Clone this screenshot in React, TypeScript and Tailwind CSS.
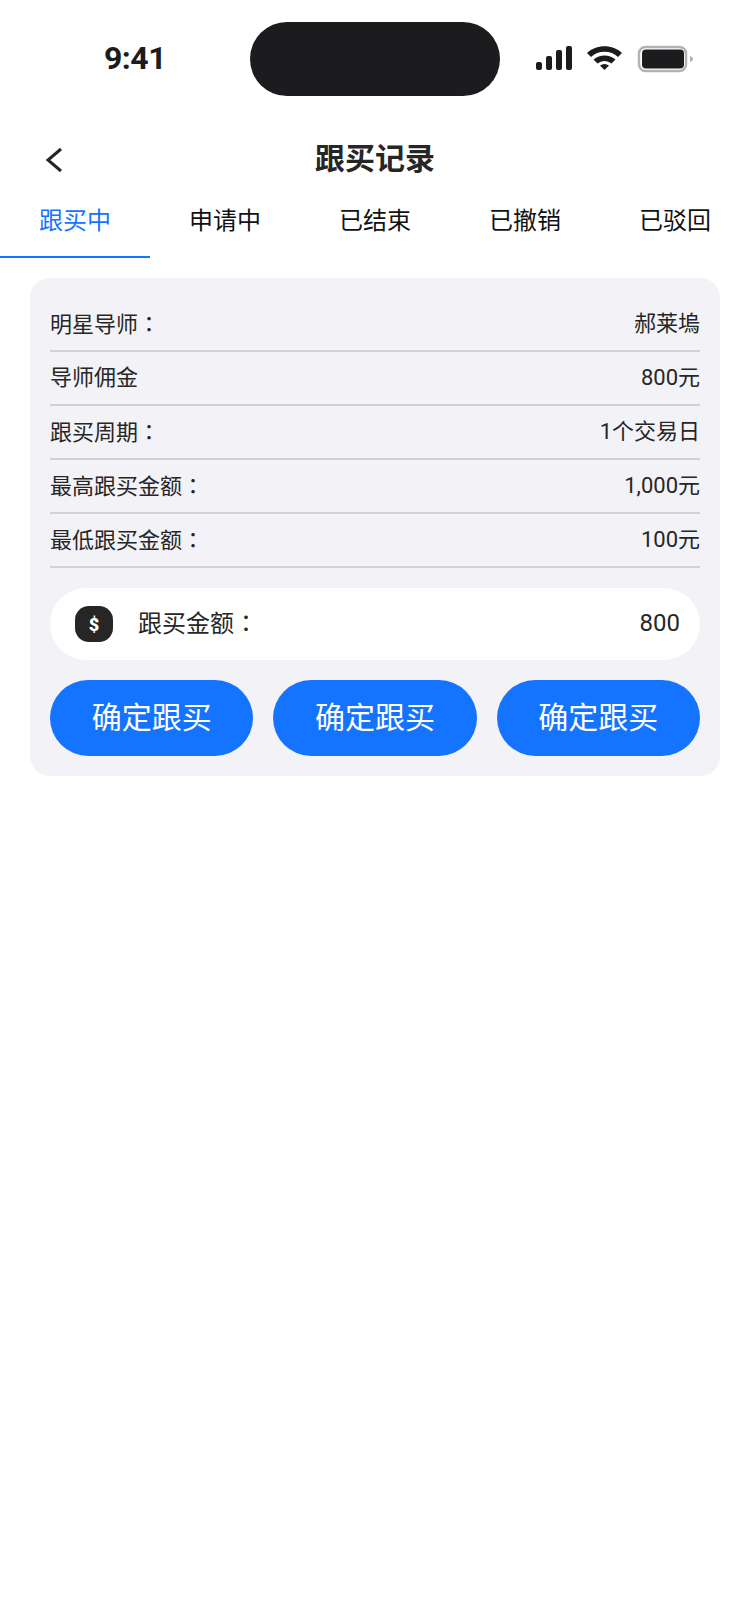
const tabs = ['跟买中', '申请中', '已结束', '已撤销', '已驳回'];

const rows = [
  { label: '明星导师', colon: true, value: '郝莱塢' },
  { label: '导师佣金', colon: false, value: '800元' },
  { label: '跟买周期', colon: true, value: '1个交易日' },
  { label: '最高跟买金额', colon: true, value: '1,000元' },
  { label: '最低跟买金额', colon: true, value: '100元' },
];

// full-width colon sits centered in the TC font
const Colon = () => <span className="font-['Noto_Sans_CJK_TC',sans-serif]">：</span>;

const StatusIcons = () => (
  <svg width="158" height="28" viewBox="0 0 158 28" fill="none">
    <rect x="1" y="17" width="6" height="8" rx="2" fill="#1c1c1e" />
    <rect x="11" y="11" width="6" height="14" rx="2" fill="#1c1c1e" />
    <rect x="21" y="5" width="6" height="20" rx="2" fill="#1c1c1e" />
    <rect x="31" y="1" width="6" height="24" rx="2" fill="#1c1c1e" />
    <path d="M52 8C61 -1 78 -1 87 8L83 12C76 5 63 5 56 12Z" fill="#1c1c1e" />
    <path d="M58.5 14.5C65 9 74 9 80.5 14.5L76.5 18.5C72 15 67 15 62.5 18.5Z" fill="#1c1c1e" />
    <path d="M65 20.5C68 18.5 71 18.5 74 20.5L69.5 25Z" fill="#1c1c1e" />
    <rect x="104" y="2" width="47" height="24" rx="6.5" stroke="#b3b3b3" strokeWidth="2.5" />
    <rect x="107" y="4.5" width="42" height="19" rx="4" fill="#1c1c1e" />
    <path d="M155 11C156.8 11.5 158 12.7 158 14S156.8 16.5 155 17Z" fill="#b3b3b3" />
  </svg>
);

export default function App() {
  return (
    <div className="min-h-[1624px] w-[750px] bg-white font-['Roboto','Noto_Sans_CJK_SC',sans-serif] text-[#262626]">
      {/* status bar */}
      <div className="grid h-[120px] grid-cols-[250px_250px_250px] pt-[22px]">
        <div className="flex h-[74px] items-center justify-center pb-[2px] pl-5 text-[32px] font-bold tracking-[-0.5px] text-[#1c1c1e]">
          9:41
        </div>
        <div className="h-[74px] rounded-[37px] bg-[#1c1c1e]" />
        <div className="flex h-[74px] items-center pl-[35px]">
          <StatusIcons />
        </div>
      </div>

      {/* nav */}
      <div className="relative flex h-[80px] items-center justify-center pb-[3px]">
        <svg className="absolute left-[45px] top-[27px]" width="18" height="26" viewBox="0 0 18 26" fill="none">
          <path d="M16 2L3 13L16 24" stroke="#262626" strokeWidth="3" />
        </svg>
        <h1 className="text-[30px] font-bold">跟买记录</h1>
      </div>

      {/* tabs */}
      <div className="flex h-[58px]">
        {tabs.map((tab, index) => (
          <div
            key={tab}
            className={
              index === 0
                ? 'flex h-full w-[150px] items-center justify-center border-b-2 border-[#1473ff] pb-[18px] pt-[4px] text-[24px] text-[#1473ff]'
                : 'flex h-full w-[150px] items-center justify-center border-b-2 border-transparent pb-[18px] pt-[4px] text-[24px] text-[#111111]'
            }
          >
            {tab}
          </div>
        ))}
      </div>

      {/* card */}
      <div className="mx-[30px] mt-5 rounded-[20px] bg-[#f2f2f7] p-5">
        {rows.map((row) => (
          <div
            key={row.label}
            className="flex h-[54px] items-center justify-between border-b-2 border-[#d1d1d6] pb-[2px] text-[22px]"
          >
            <span>
              {row.label}
              {row.colon && <Colon />}
            </span>
            <span>{row.value}</span>
          </div>
        ))}

        <div className="mt-5 flex h-[72px] items-center rounded-[36px] bg-white pl-[25px] pr-5 text-[24px]">
          <div className="flex h-9 w-[38px] items-center justify-center rounded-[14px] bg-[#262626] text-[18px] font-black text-white">
            $
          </div>
          <span className="ml-[25px] pb-[2px]">
            跟买金额
            <Colon />
          </span>
          <span className="ml-auto pb-[2px]">800</span>
        </div>

        <div className="mt-5 grid grid-cols-3 gap-5">
          {[0, 1, 2].map((i) => (
            <button
              key={i}
              className="flex h-[76px] items-center justify-center rounded-[38px] bg-[#1473ff] pb-[2px] text-[30px] text-white"
            >
              确定跟买
            </button>
          ))}
        </div>
      </div>
    </div>
  );
}
